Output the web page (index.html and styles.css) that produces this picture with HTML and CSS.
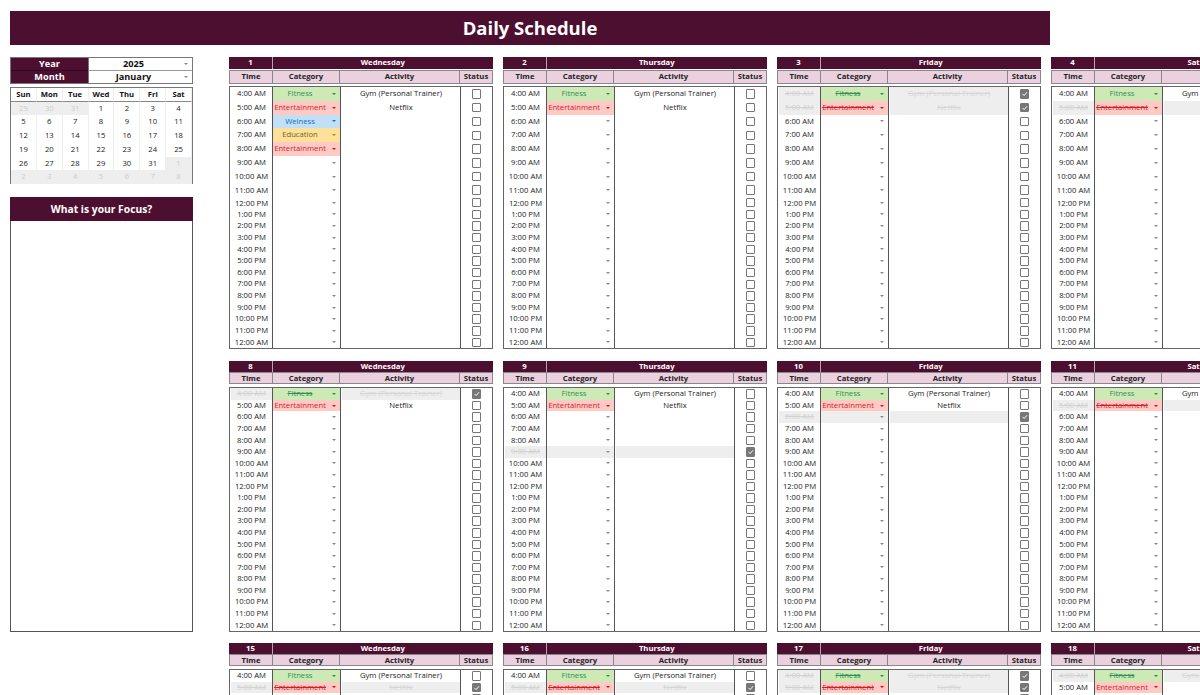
FILE: index.html
```html
<!DOCTYPE html>
<html lang="en">
<head>
<meta charset="utf-8">
<title>Daily Schedule</title>
<link rel="stylesheet" href="styles.css">
</head>
<body>
<header class="title">Daily Schedule</header>
<div class="layout">
  <aside class="side">
    <div class="picker">
      <div class="picker-label">Year</div><div class="picker-value"><span>2025</span><i class="arrow"></i></div>
      <div class="picker-label">Month</div><div class="picker-value"><span>January</span><i class="arrow"></i></div>
    </div>
    <div class="calendar" id="calendar"></div>
    <section class="focus">
      <h2 class="focus-head">What is your Focus?</h2>
      <div class="focus-body"></div>
    </section>
  </aside>
  <main class="weeks" id="weeks"></main>
</div>
<script src="app.js"></script>
</body>
</html>
```
FILE: styles.css
```css
* { box-sizing: border-box; }
html, body { margin: 0; height: 100%; }
body {
  width: 1200px; height: 695px; overflow: hidden;
  padding: 11px 0 0 10px;
  background: #fff; color: #222;
  font-family: "Open Sans", "Liberation Sans", sans-serif;
  font-size: 7.7px;
}
.title {
  width: 1040px; height: 34px;
  background: #4d0f30; color: #fff;
  font-size: 18.5px; font-weight: 700; line-height: 34px; text-align: center;
}
.layout { display: flex; gap: 36px; margin-top: 12px; width: 1190px; }
.side { flex: 0 0 183px; display: flex; flex-direction: column; }
.picker {
  display: grid; grid-template-columns: 77px 1fr; grid-auto-rows: 12.5px;
  border: 1px solid #777; height: 27px;
  font-size: 9.2px; font-weight: 700; line-height: 11.5px; text-align: center;
}
.picker-label { background: #4d0f30; color: #fff; }
.picker-value { position: relative; border-left: 1px solid #777; padding-right: 14px; color: #111; }
.picker-value:nth-child(2) { border-bottom: 1px solid #999; }
.picker-label:nth-child(1) { border-bottom: 1px solid #2e0a1e; }
.picker-value span { display: block; }
.picker-value .arrow { position: absolute; right: 4px; top: 5px; }
.arrow {
  display: block; width: 0; height: 0;
  border-left: 2.5px solid transparent; border-right: 2.5px solid transparent;
  border-top: 2.5px solid #888;
}
.calendar {
  margin-top: 2.5px; height: 97.5px;
  border: 1px solid #777;
  display: grid; grid-template-columns: repeat(7, 1fr); grid-template-rows: 14px repeat(6, 13.75px);
  text-align: center; line-height: 13.75px;
}
.cal-head { font-weight: 700; color: #111; border-bottom: 1px solid #888; line-height: 13px; border-right: 1px solid #eee; }
.cal-day { border-right: 1px solid #eee; color: #222; }
.cal-off { background: #eee; color: #ccc; }
.focus { margin-top: 13px; }
.focus-head {
  margin: 0; height: 24px; background: #4d0f30; color: #fff;
  font-size: 10.3px; font-weight: 700; line-height: 24px; text-align: center;
}
.focus-body { height: 411px; border: 1px solid #555; border-top: 0; }
.weeks { display: flex; flex-direction: column; gap: 12px; flex: 0 0 auto; }
.week { display: flex; gap: 10px; }
.week3 { margin-top: -1px; }
.card { flex: 0 0 264px; }
.band { display: grid; grid-template-columns: 44px 1fr; height: 11px; text-align: center; background: #4d0f30; color: #fff; font-weight: 700; line-height: 11px; width: 263.5px; }
.week1 .band { height: 12px; line-height: 11px; }
.band-num { border-right: 1px solid #b9a3af; }
.cols {
  display: grid; grid-template-columns: 44px 67px 120px 33px;
  height: 12px;
  text-align: center; font-weight: 700; color: #222; line-height: 10px;
}
.week1 .cols { height: 14px; line-height: 11px; margin-top: 1px; }
.cols div { background: #ebd1df; border: 1px solid #888; border-left-width: 0; }
.cols div:first-child { border-left-width: 1px; }
.body { margin-top: 3px; border: 1px solid #666; }
.week1 .body { margin-top: 2px; }
.row { display: grid; grid-template-columns: 42px 68px 120px 32px; height: 11.57px; line-height: 11.57px; text-align: center; }
.week1 .row { height: 11.65px; line-height: 11.65px; }
.week1 .row:nth-child(-n+7) { height: 13.8px; line-height: 13.8px; }
.week1 .row:nth-child(8) { height: 13px; line-height: 13px; }
.week1 .row:nth-child(9) { height: 12px; line-height: 12px; }
.time { color: #222; white-space: nowrap; padding-left: 1px; background-clip: content-box; }
.cat { position: relative; border-left: 1px solid #555; padding-right: 13px; white-space: nowrap; }
.cat .arrow { position: absolute; right: 4px; top: 50%; margin-top: -1px; }
.act { border-left: 1px solid #555; padding-left: 1px; background-clip: content-box; white-space: nowrap; color: #222; }
.stat { border-left: 1px solid #555; display: flex; align-items: center; justify-content: center; }
.box { display: block; width: 9.5px; height: 9.5px; border: 1px solid #777; border-radius: 1px; background: #fff; }
.box svg { display: block; width: 100%; height: 100%; }
.on { background: #777; }
.fitness { background: #cdeab6; color: #2f8f55; }
.fitness .arrow { border-top-color: #3a8a3a; }
.entertainment { background: #ffc9c4; color: #cc1f2b; }
.entertainment .arrow { border-top-color: #d0101c; }
.wellness { background: #bfe0f7; color: #1c6bbd; }
.wellness .arrow { border-top-color: #1c6bbd; }
.education { background: #fde09a; color: #75621f; }
.education .arrow { border-top-color: #b8860b; }
.done .time { background-color: #eee; color: #d2d2d2; text-decoration: line-through; }
.done .act { background-color: #eee; color: #d6d6d6; text-decoration: line-through; }
.done .cat { text-decoration: line-through; }
.done .cat.empty { background: #eee; }
```
FILE: app.js
```js
var WEEKS = [
  { first: 1, done: [[], [], [0, 1], [1]] },
  { first: 8, done: [[0], [5], [2], [1]] },
  { first: 15, done: [[1], [1], [0, 1], [0]] }
];
var DAYS = ["Wednesday", "Thursday", "Friday", "Saturday"];
var HOURS = ["4:00 AM", "5:00 AM", "6:00 AM", "7:00 AM", "8:00 AM", "9:00 AM", "10:00 AM", "11:00 AM", "12:00 PM",
  "1:00 PM", "2:00 PM", "3:00 PM", "4:00 PM", "5:00 PM", "6:00 PM", "7:00 PM", "8:00 PM", "9:00 PM", "10:00 PM", "11:00 PM", "12:00 AM"];
var TICK = '<svg viewBox="0 0 10 10"><path d="M2 5.2 4.2 7.4 8 3" fill="none" stroke="#fff" stroke-width="1.3"/></svg>';

function renderRow(hour, i, cats, done) {
  var cat = cats[i] || "";
  var act = i === 0 ? "Gym (Personal Trainer)" : i === 1 ? "Netflix" : "";
  var isDone = done.indexOf(i) !== -1;
  return '<div class="row' + (isDone ? ' done' : '') + '">' +
    '<div class="time">' + hour + '</div>' +
    '<div class="cat ' + (cat ? cat.toLowerCase().replace("welness", "wellness") : 'empty') + '">' + cat + '<i class="arrow"></i></div>' +
    '<div class="act">' + act + '</div>' +
    '<div class="stat"><span class="box' + (isDone ? ' on">' + TICK : '">') + '</span></div>' +
    '</div>';
}

document.getElementById("weeks").innerHTML = WEEKS.map(function (w, wi) {
  var cards = DAYS.map(function (day, di) {
    var cats = ["Fitness", "Entertainment"];
    if (wi === 0 && di === 0) cats = ["Fitness", "Entertainment", "Welness", "Education", "Entertainment"];
    return '<article class="card">' +
      '<div class="band"><div class="band-num">' + (w.first + di) + '</div><div>' + day + '</div></div>' +
      '<div class="cols"><div>Time</div><div>Category</div><div>Activity</div><div>Status</div></div>' +
      '<div class="body">' + HOURS.map(function (h, i) { return renderRow(h, i, cats, w.done[di]); }).join("") + '</div>' +
      '</article>';
  }).join("");
  return '<section class="week week' + (wi + 1) + '">' + cards + '</section>';
}).join("");

var cal = ["Sun", "Mon", "Tue", "Wed", "Thu", "Fri", "Sat"].map(function (d) {
  return '<div class="cal-head">' + d + '</div>';
}).join("");
for (var n = 0; n < 42; n++) {
  var date = n - 2;
  var off = date < 1 || date > 31;
  var label = date < 1 ? 31 + date : date > 31 ? date - 31 : date;
  cal += '<div class="cal-day' + (off ? ' cal-off' : '') + '">' + label + '</div>';
}
document.getElementById("calendar").innerHTML = cal;
```
